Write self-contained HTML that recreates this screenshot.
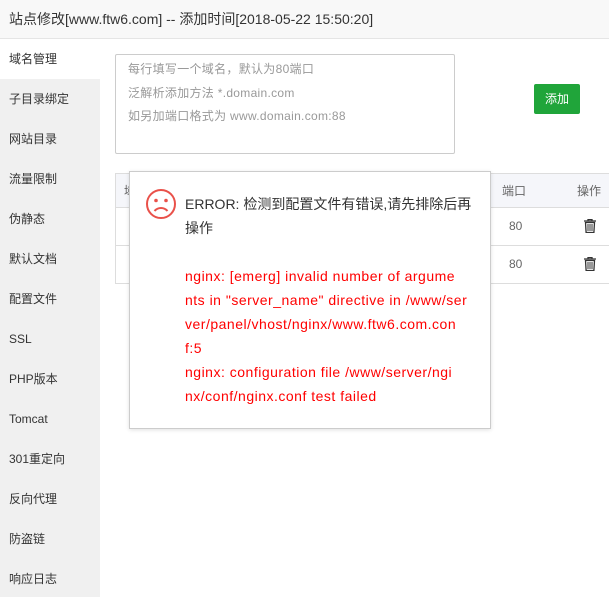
<!DOCTYPE html>
<html><head><meta charset="utf-8"><style>
*{margin:0;padding:0;box-sizing:border-box}
body{width:609px;height:597px;overflow:hidden;background:#fff;font-family:"Liberation Sans","Noto Sans CJK SC",sans-serif;font-size:12px;color:#333;position:relative}
.hd{position:absolute;left:0;top:0;width:609px;height:39px;background:#f8f8f8;border-bottom:1px solid #e5e5e5;font-size:14px;line-height:38px;padding-left:9px;color:#333}
.sb{position:absolute;left:0;top:39px;width:100px;height:558px;background:#f0f0f0}
.sb div{height:40px;line-height:40px;padding-left:9px;font-size:12px;color:#333}
.sb div.on{background:#fff}
.ta{position:absolute;left:115px;top:54px;width:340px;height:100px;border:1px solid #ccc;border-radius:2px;padding:3px 12px;color:#999;font-size:12px;line-height:23.5px;letter-spacing:0.3px}
.btn{position:absolute;left:534px;top:84px;width:46px;height:30px;background:#20a53a;border-radius:2px;color:#fff;font-size:12px;line-height:30px;text-align:center}
.tb{position:absolute;left:115px;top:173px;width:494px;height:111px;border:1px solid #ddd;border-right:none}
.th{height:34px;background:#f5f6fa;border-bottom:1px solid #ddd;position:relative;color:#666}
.tr{height:38px;border-bottom:1px solid #ddd;position:relative;color:#666}
.c1{position:absolute;left:386px;top:0;line-height:34px}
.c2{position:absolute;left:461px;line-height:34px}
.tr .c1{left:393px;line-height:37px}
.tr .c2{left:468px;top:11px;line-height:14px}
.pop{position:absolute;left:129px;top:171px;width:362px;height:258px;background:#fff;border:1px solid #ccc;box-shadow:0 1px 4px rgba(0,0,0,.12)}
.txt{position:absolute;left:55px;top:20px;width:300px;font-size:14px;line-height:24px;color:#333;white-space:nowrap}
.red{color:#f00;letter-spacing:0.5px}
</style></head><body>
<div class="hd">站点修改[www.ftw6.com] -- 添加时间[2018-05-22 15:50:20]</div>
<div class="sb">
<div class="on">域名管理</div><div>子目录绑定</div><div>网站目录</div><div>流量限制</div><div>伪静态</div><div>默认文档</div><div>配置文件</div><div>SSL</div><div>PHP版本</div><div>Tomcat</div><div>301重定向</div><div>反向代理</div><div>防盗链</div><div>响应日志</div>
</div>
<div class="ta">每行填写一个域名，默认为80端口<br>泛解析添加方法 *.domain.com<br>如另加端口格式为 www.domain.com:88</div>
<div class="btn">添加</div>
<div class="tb">
<div class="th"><span style="position:absolute;left:8px;line-height:34px">域</span><span class="c1">端口</span><span class="c2">操作</span></div>
<div class="tr"><span class="c1">80</span><span class="c2"><svg width="12" height="14" viewBox="0 0 12 14"><path d="M0 2h12M4 2V0.5h4V2M1.5 3.5h9l-.6 10H2.1z" fill="none" stroke="#333" stroke-width="1.3"/><path d="M4 5v7M6 5v7M8 5v7" stroke="#333"/></svg></span></div>
<div class="tr"><span class="c1">80</span><span class="c2"><svg width="12" height="14" viewBox="0 0 12 14"><path d="M0 2h12M4 2V0.5h4V2M1.5 3.5h9l-.6 10H2.1z" fill="none" stroke="#333" stroke-width="1.3"/><path d="M4 5v7M6 5v7M8 5v7" stroke="#333"/></svg></span></div>
</div>
<div class="pop">
<svg style="position:absolute;left:15px;top:16px" width="32" height="32" viewBox="0 0 32 32"><circle cx="16" cy="16" r="14" fill="none" stroke="#e9514a" stroke-width="2"/><circle cx="11" cy="12.5" r="1.8" fill="#e9514a"/><circle cx="21" cy="12.5" r="1.8" fill="#e9514a"/><path d="M9.5 23c3.5-4 9.5-4 13 0" fill="none" stroke="#e9514a" stroke-width="2"/></svg>
<div class="txt">ERROR: 检测到配置文件有错误,请先排除后再<br>操作<br><br><span class="red">nginx: [emerg] invalid number of argume<br>nts in "server_name" directive in /www/ser<br>ver/panel/vhost/nginx/www.ftw6.com.con<br>f:5<br>nginx: configuration file /www/server/ngi<br>nx/conf/nginx.conf test failed</span></div>
</div>
</body></html>
